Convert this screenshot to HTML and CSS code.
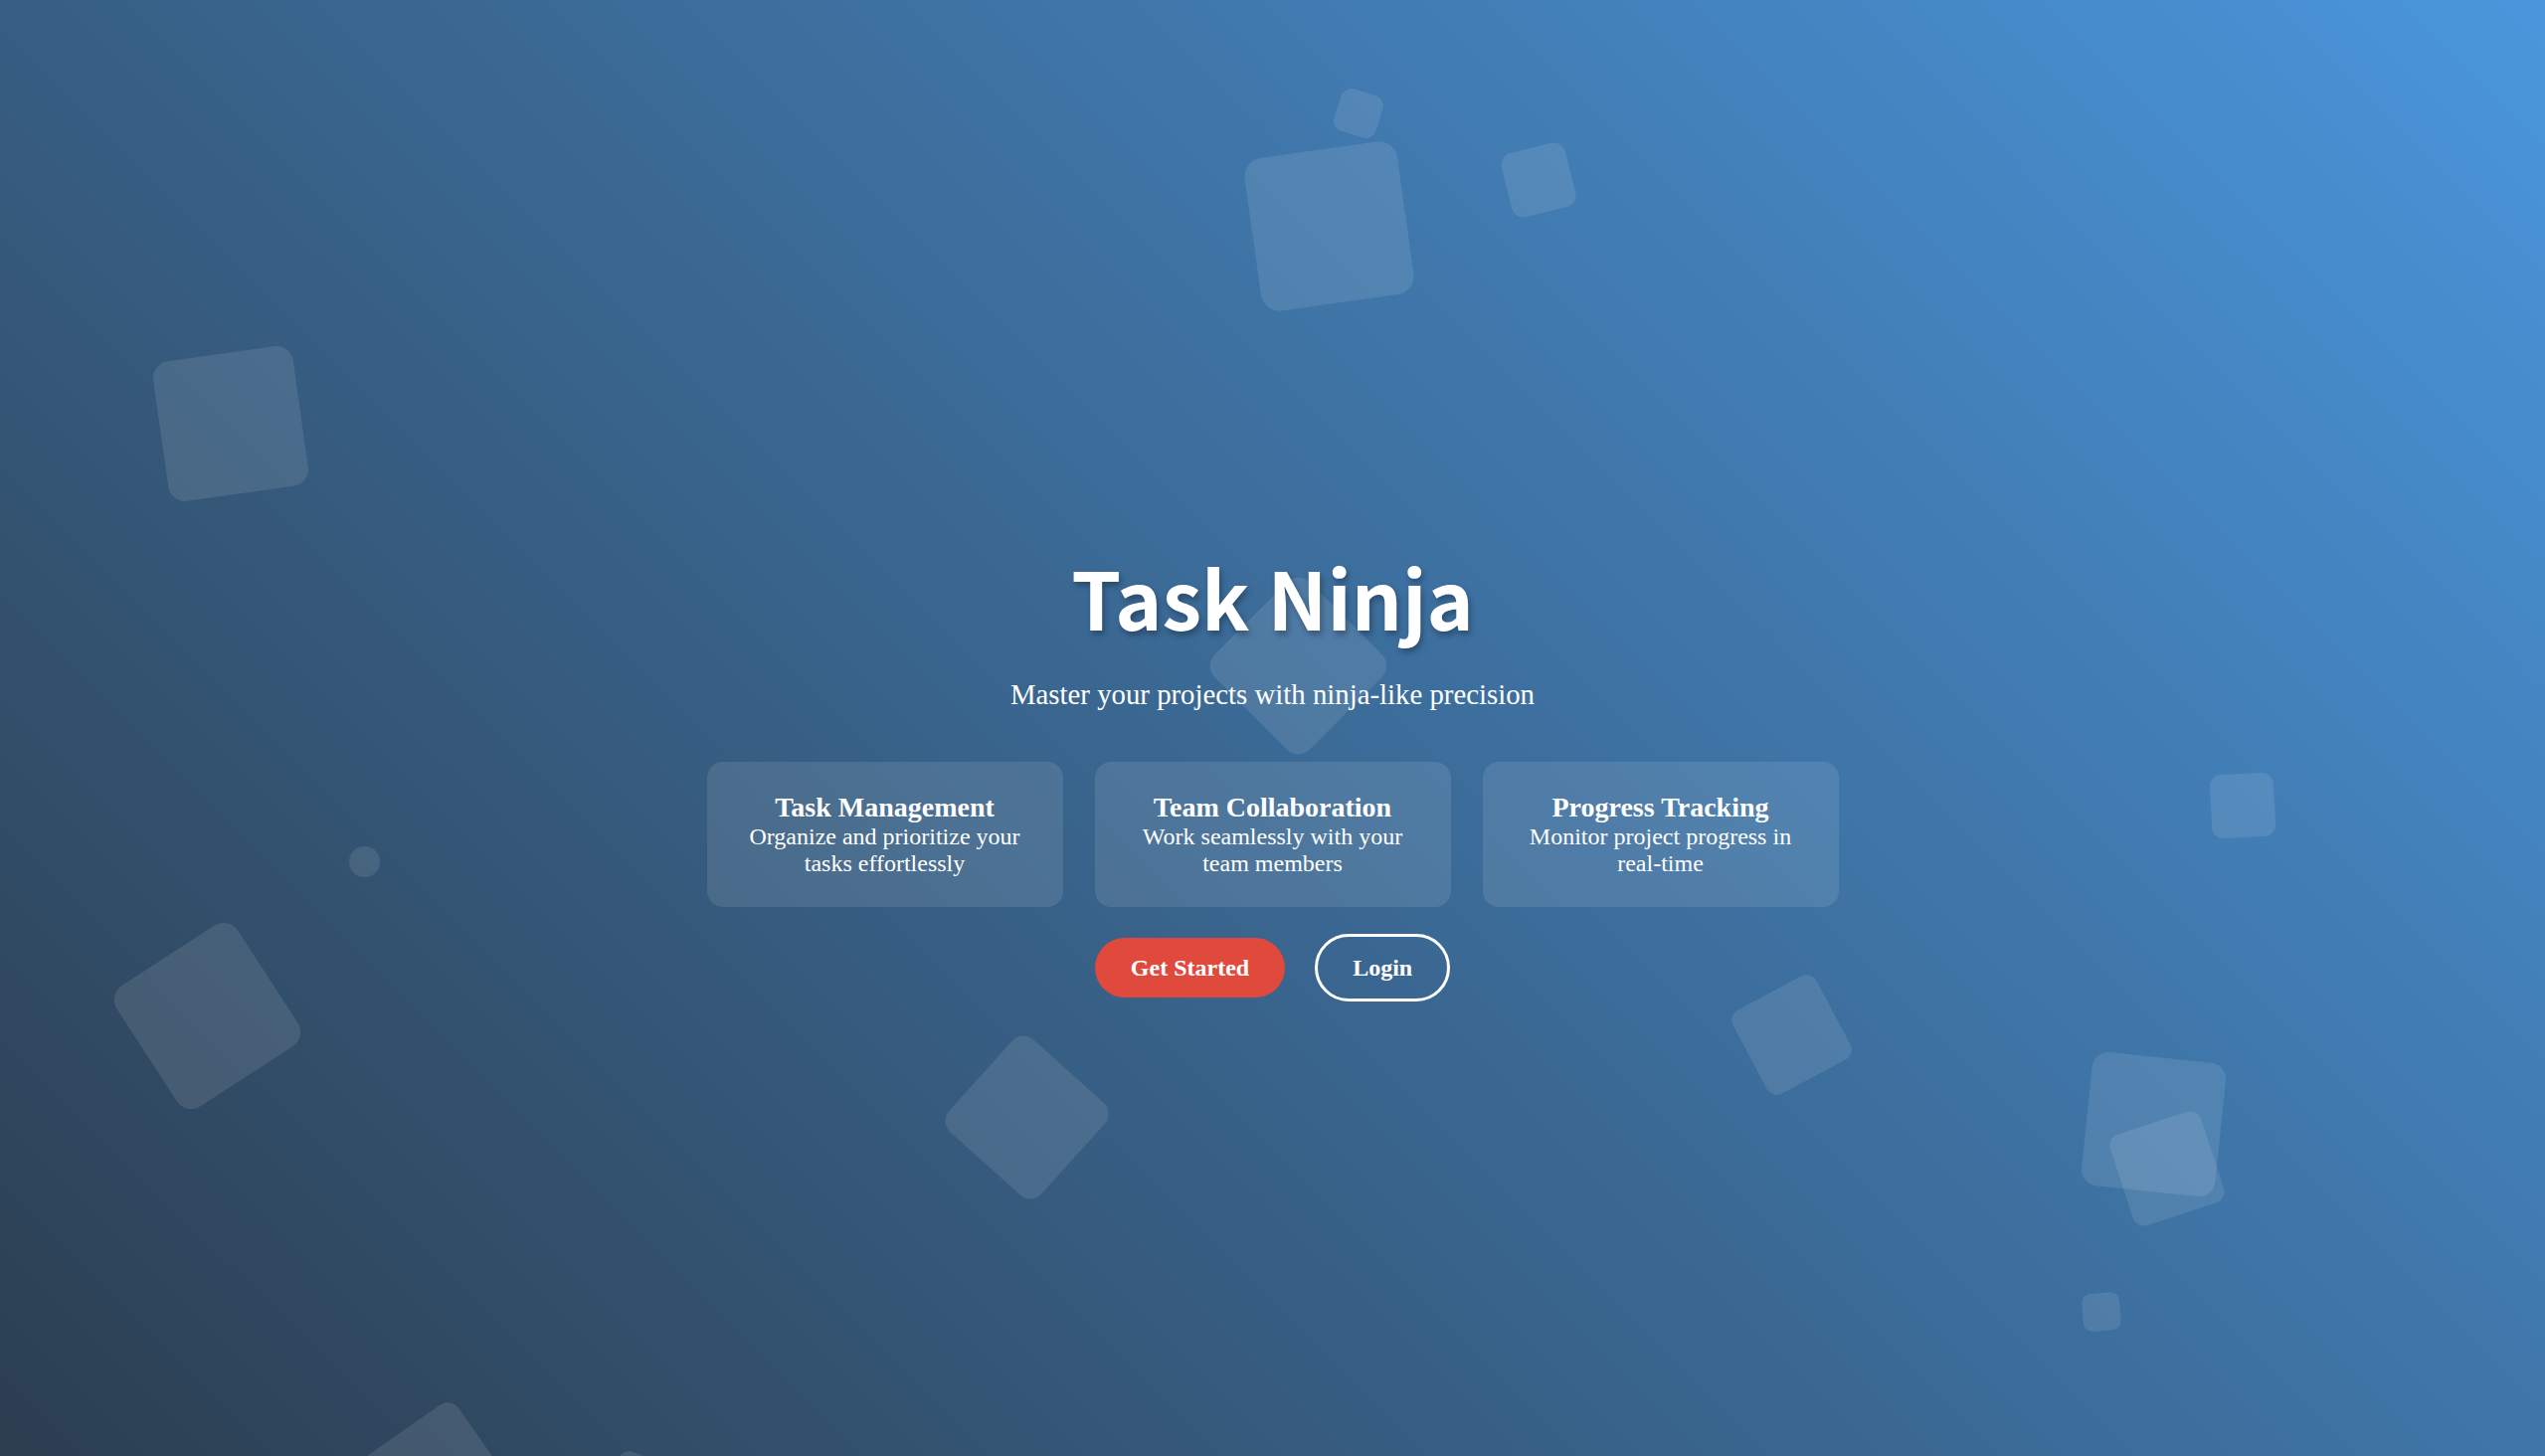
FILE: index.html
```html
<!DOCTYPE html>
<html lang="en">
<head>
<meta charset="utf-8">
<title>Task Ninja</title>
<link rel="stylesheet" href="styles.css">
</head>
<body>
<div class="shapes">
  <div class="shape s1"></div>
  <div class="shape s2"></div>
  <div class="shape s3"></div>
  <div class="shape s4"></div>
  <div class="shape s5"></div>
  <div class="shape s6"></div>
  <div class="shape s7"></div>
  <div class="shape s8"></div>
  <div class="shape s9"></div>
  <div class="shape s10"></div>
  <div class="shape s11"></div>
  <div class="shape s12"></div>
  <div class="shape s13"></div>
  <div class="shape s14"></div>
  <div class="shape s15"></div>
</div>
<main class="hero">
  <h1 class="title">Task Ninja</h1>
  <p class="subtitle">Master your projects with ninja-like precision</p>
  <div class="features">
    <div class="card">
      <h3 class="card-title">Task Management</h3>
      <p class="card-text">Organize and prioritize your tasks effortlessly</p>
    </div>
    <div class="card">
      <h3 class="card-title">Team Collaboration</h3>
      <p class="card-text">Work seamlessly with your team members</p>
    </div>
    <div class="card">
      <h3 class="card-title">Progress Tracking</h3>
      <p class="card-text">Monitor project progress in real-time</p>
    </div>
  </div>
  <div class="actions">
    <a class="btn btn-primary" href="#">Get Started</a>
    <a class="btn btn-outline" href="#">Login</a>
  </div>
</main>
</body>
</html>
```

FILE: styles.css
```css
html, body {
  margin: 0;
  padding: 0;
  height: 100%;
}

body {
  font-family: "Liberation Serif", "Times New Roman", serif;
  font-size: 24px;
  color: #ffffff;
  background: linear-gradient(45deg, #2c3e50 0%, #4a96dc 100%);
  overflow: hidden;
  position: relative;
  min-height: 100vh;
}

.shapes {
  position: absolute;
  inset: 0;
  z-index: 0;
  overflow: hidden;
}

.shape {
  position: absolute;
  background: rgba(255, 255, 255, 0.1);
  border-radius: 12%;
}

.s1 { left: 1259px; top: 150px; width: 155px; height: 155px; transform: rotate(-8deg); }
.s2 { left: 1344px; top: 92px; width: 44px; height: 44px; transform: rotate(18deg); border-radius: 24%; }
.s3 { left: 1514px; top: 148px; width: 66px; height: 66px; transform: rotate(-14deg); border-radius: 18%; }
.s4 { left: 161px; top: 355px; width: 142px; height: 142px; transform: rotate(-8deg); }
.s5 { left: 351px; top: 851px; width: 31px; height: 31px; border-radius: 50%; }
.s6 { left: 136px; top: 949px; width: 145px; height: 145px; transform: rotate(-33deg); }
.s7 { left: 970px; top: 1061px; width: 125px; height: 125px; transform: rotate(42deg); }
.s8 { left: 1238px; top: 602px; width: 135px; height: 135px; transform: rotate(45deg); }
.s9 { left: 1754px; top: 993px; width: 95px; height: 95px; transform: rotate(-28deg); }
.s10 { left: 2223px; top: 778px; width: 64px; height: 64px; transform: rotate(-3deg); border-radius: 18%; }
.s11 { left: 2098px; top: 1063px; width: 135px; height: 135px; transform: rotate(6deg); }
.s12 { left: 2131px; top: 1127px; width: 96px; height: 96px; transform: rotate(-18deg); }
.s13 { left: 2094px; top: 1300px; width: 38px; height: 38px; transform: rotate(-5deg); border-radius: 24%; }
.s14 { left: 380px; top: 1428px; width: 118px; height: 118px; transform: rotate(-35deg); }
.s15 { left: 605px; top: 1470px; width: 100px; height: 100px; transform: rotate(20deg); }

.hero {
  position: relative;
  z-index: 1;
  box-sizing: border-box;
  height: 100vh;
  padding-top: 83px;
  display: flex;
  flex-direction: column;
  align-items: center;
  justify-content: center;
  text-align: center;
}

.title {
  margin: 0;
  font-family: "Noto Sans CJK SC", "Noto Sans", sans-serif;
  font-weight: 700;
  font-size: 80px;
  text-shadow: 2px 4px 6px rgba(0, 0, 0, 0.3);
}

.subtitle {
  margin: 25px 0 0;
  font-size: 28.8px;
}

.features {
  margin-top: 51px;
  display: grid;
  grid-template-columns: repeat(3, 358px);
  gap: 32px;
}

.card {
  background: rgba(255, 255, 255, 0.1);
  border-radius: 16px;
  padding: 29px 30px;
  display: flex;
  flex-direction: column;
  justify-content: center;
  height: 146px;
  box-sizing: border-box;
}

.card-title {
  margin: 0;
  font-size: 28px;
  font-weight: 700;
}

.card-text {
  margin: 0;
  font-size: 24px;
}

.actions {
  margin-top: 27px;
  display: flex;
  align-items: center;
  gap: 30px;
}

.btn {
  display: inline-block;
  font-weight: 700;
  font-size: 24px;
  color: #ffffff;
  text-decoration: none;
  border-radius: 40px;
  padding: 16px 36px;
  line-height: 28px;
}

.btn-primary {
  background: #e04a3d;
}

.btn-outline {
  border: 3px solid #ffffff;
  padding: 17px 35px;
}
```
